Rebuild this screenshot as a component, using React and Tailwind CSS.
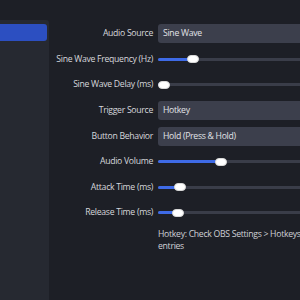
import React from "react";

const FONT = { fontFamily: '"Open Sans", "Noto Sans", sans-serif' };

function Dropdown({ value }) {
  return (
    <div className="h-[19px] w-full rounded-[3px] bg-[#3c3f4c] pl-[5px] flex items-center text-[8.7px] tracking-[-0.3px] text-[#e2e3e8]">
      {value}
    </div>
  );
}

function Slider({ thumb }) {
  // thumb: centre of the knob, px from the track's left edge
  return (
    <div className="relative h-[8px] w-full flex items-center">
      <div className="h-[3px] w-full rounded-full bg-[#3a3d49]" />
      <div
        className="absolute left-0 top-[2.5px] h-[3px] rounded-full bg-[#3e6ae6]"
        style={{ width: thumb }}
      />
      <div
        className="absolute top-0 h-[8px] w-[12px] rounded-full bg-white border border-[#d8d8d8]"
        style={{ left: thumb - 6 }}
      />
    </div>
  );
}

const ROWS = [
  { label: "Audio Source", kind: "select", value: "Sine Wave" },
  { label: "Sine Wave Frequency (Hz)", kind: "slider", thumb: 35 },
  { label: "Sine Wave Delay (ms)", kind: "slider", thumb: 6 },
  { label: "Trigger Source", kind: "select", value: "Hotkey" },
  { label: "Button Behavior", kind: "select", value: "Hold (Press & Hold)" },
  { label: "Audio Volume", kind: "slider", thumb: 63 },
  { label: "Attack Time (ms)", kind: "slider", thumb: 22 },
  { label: "Release Time (ms)", kind: "slider", thumb: 20 },
];

export default function App() {
  return (
    <div className="w-[300px] h-[300px] overflow-hidden bg-[#1d1f26] flex" style={FONT}>
      <div className="w-[49px] shrink-0 pt-[20px] flex flex-col">
        <div className="flex-1 bg-[#262931] rounded-tr-[3px] pt-[4px]">
          <div className="h-[17px] w-[47px] rounded-r-[3px] bg-[#2c4fc1]" />
        </div>
      </div>

      <div className="flex-1 pt-[21px] pr-[3px]">
        {ROWS.map((r) => (
          <div key={r.label} className="h-[25.6px] grid grid-cols-[104px_1fr] gap-x-[5px] items-center">
            <div className="text-right text-[8.7px] tracking-[-0.3px] text-[#d6d7dc] whitespace-nowrap">{r.label}</div>
            {r.kind === "select" ? <Dropdown value={r.value} /> : <Slider thumb={r.thumb} />}
          </div>
        ))}
        <div className="ml-[109px] mt-[2px] text-[8.7px] tracking-[-0.3px] leading-[12px] text-[#cfd0d6] whitespace-nowrap">
          Hotkey: Check OBS Settings &gt; Hotkeys tab for Sine Wave
          <br />
          entries
        </div>
      </div>
    </div>
  );
}
